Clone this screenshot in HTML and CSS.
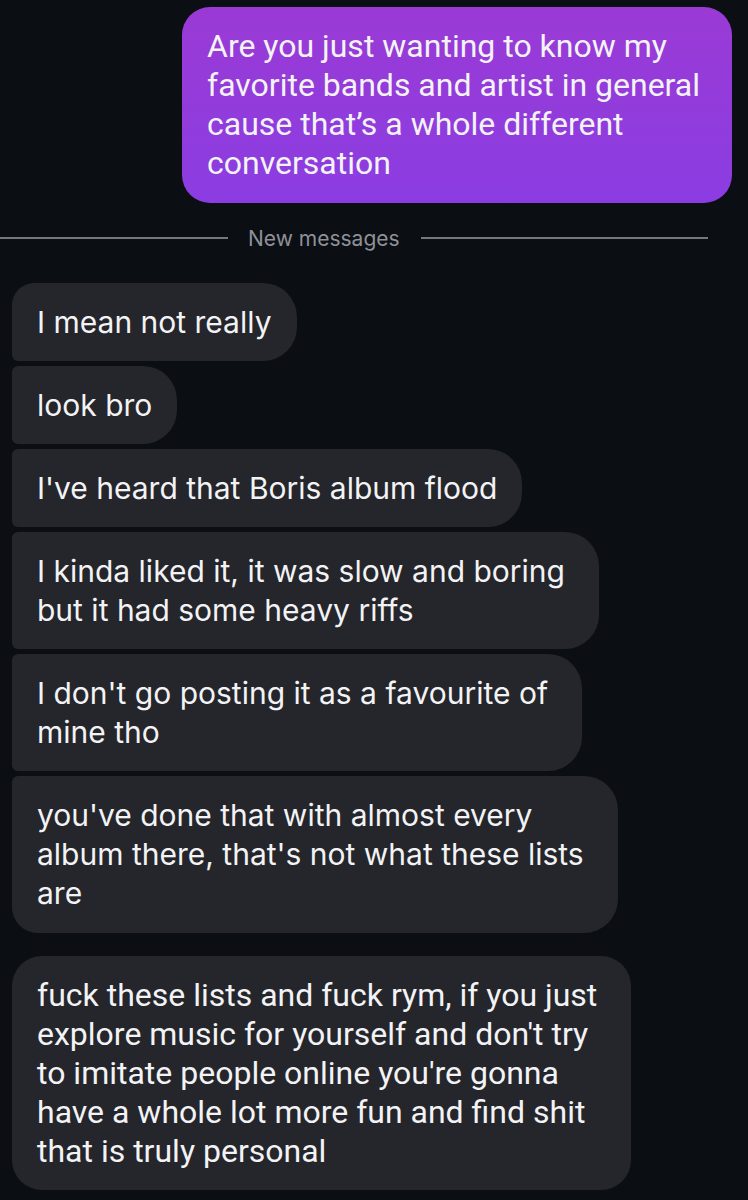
FILE: index.html
```html
<!DOCTYPE html>
<html lang="en">
<head>
	<meta charset="UTF-8">
	<title>Messages</title>
	<link rel="stylesheet" href="styles.css">
</head>
<body>
<div class="thread">
	<div class="row out">
		<div class="bubble sent">Are you just wanting to know my<br>favorite bands and artist in general<br>cause that’s a whole different<br>conversation</div>
	</div>

	<div class="divider">
		<span class="line left"></span>
		<span class="label">New messages</span>
		<span class="line right"></span>
	</div>

	<div class="group">
		<div class="bubble recv first">I mean not really</div>
		<div class="bubble recv">look bro</div>
		<div class="bubble recv">I've heard that Boris album flood</div>
		<div class="bubble recv multi">I kinda liked it, it was slow and boring<br>but it had some heavy riffs</div>
		<div class="bubble recv multi">I don't go posting it as a favourite of<br>mine tho</div>
		<div class="bubble recv multi last">you've done that with almost every<br>album there, that's not what these lists<br>are</div>
	</div>

	<div class="group">
		<div class="bubble recv multi single narrow">fuck these lists and fuck rym, if you just<br>explore music for yourself and don't try<br>to imitate people online you're gonna<br>have a whole lot more fun and find shit<br>that is truly personal</div>
	</div>
</div>
</body>
</html>
```

FILE: styles.css
```css
body{
	margin: 0;
	background: #0b0e13;
	font-family: Inter, "Noto Sans", sans-serif;
	color: #f3f3f5;
}
.thread{
	padding-top: 7px;
}
.row.out{
	display: flex;
	justify-content: flex-end;
	padding-right: 16px;
}
.bubble{
	font-size: 30px;
	line-height: 39px;
	padding: 20px 25px 19px;
	white-space: nowrap;
}
.sent{
	background: linear-gradient(180deg, #9a3ad5 0%, #8b3de2 100%);
	border-radius: 28px;
	font-family: Roboto, "Noto Sans", sans-serif;
	font-size: 32px;
	padding: 20px 32px 20px 25px;
}
.divider{
	display: flex;
	align-items: center;
	height: 34px;
	margin-top: 18px;
	margin-bottom: 28px;
	padding-right: 40px;
}
.line{
	height: 2px;
	background: #74777e;
}
.line.left{
	width: 228px;
}
.line.right{
	flex: 1;
}
.label{
	color: #8e9197;
	font-size: 21px;
	padding: 0 21px 0 20px;
}
.group{
	display: flex;
	flex-direction: column;
	align-items: flex-start;
	gap: 5px;
	padding-left: 12px;
	margin-bottom: 23px;
}
.recv{
	background: #24262b;
	border-radius: 6px 34px 34px 6px;
}
.recv.multi{
	padding-right: 34px;
}
.recv.first{
	border-top-left-radius: 22px;
}
.recv.last{
	border-bottom-left-radius: 26px;
	padding-bottom: 20px;
}
.recv.single{
	border-radius: 30px;
}
.narrow{
	font-family: Roboto, "Noto Sans", sans-serif;
	font-size: 32px;
}
```
